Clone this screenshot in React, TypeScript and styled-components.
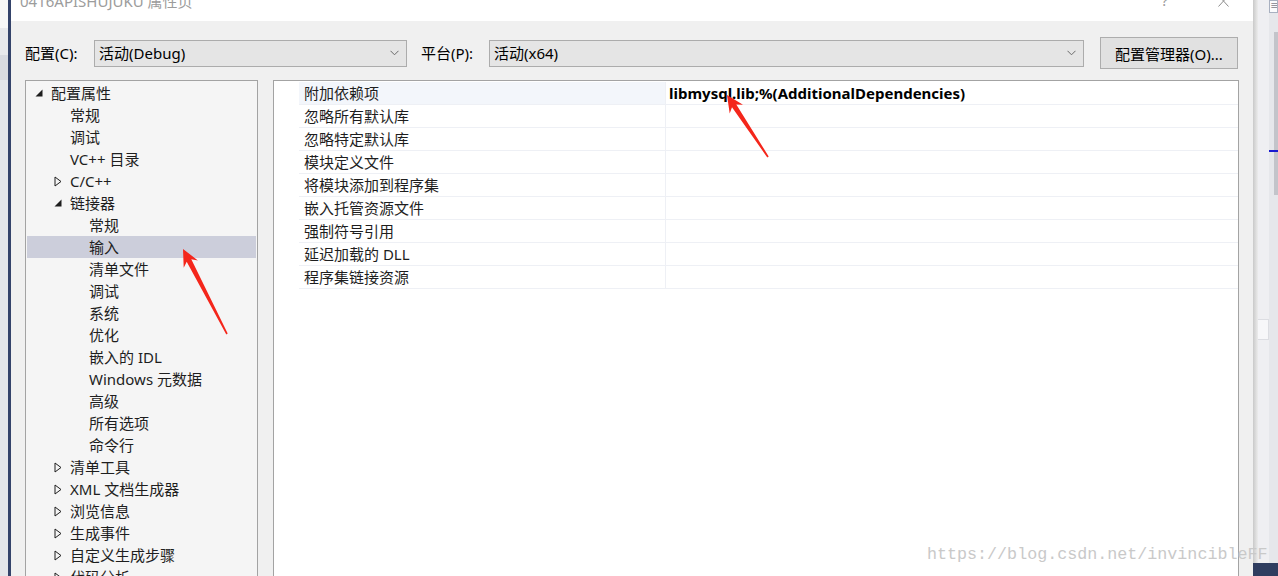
import React from "react";
import styled, { createGlobalStyle } from "styled-components";

const UI = `"Noto Sans", "Noto Sans CJK SC", sans-serif`;

const GlobalStyle = createGlobalStyle`
  html, body { margin: 0; padding: 0; background: #f0f0f0; overflow: hidden; }
  body { font-family: ${UI}; }
  * { box-sizing: border-box; }
`;

const Page = styled.div`
  position: relative;
  display: flex;
  width: 1278px;
  height: 576px;
  overflow: hidden;
  font-family: ${UI};
  font-size: 15px;
  color: #1e1e1e;
`;

const LeftStrip = styled.div`
  width: 8px;
  display: flex;
  flex-direction: column;
  background: #e4e6ea;
`;

const StripBlock = styled.div<{ $h: number; $c: string }>`
  height: ${(p) => p.$h}px;
  background: ${(p) => p.$c};
  flex: none;
`;

const NavyLine = styled.div`
  width: 3px;
  background: #34436a;
`;

const Dialog = styled.div`
  width: 1242px;
  display: flex;
  flex-direction: column;
  background: #f0f0f0;
  overflow: hidden;
`;

const TitleBar = styled.div`
  height: 21px;
  flex: none;
  display: flex;
  align-items: flex-start;
  background: #ffffff;
  overflow: hidden;
`;

const TitleText = styled.div`
  margin-top: -6px;
  padding-left: 9px;
  line-height: 15px;
  font-size: 15px;
  color: #9c9c9c;
  white-space: nowrap;
`;

const TitleButtons = styled.div`
  margin-left: auto;
  display: flex;
  align-items: flex-start;
`;

const HelpGlyph = styled.div`
  margin-top: -7px;
  line-height: 15px;
  font-size: 15px;
  color: #9c9c9c;
  margin-right: 50px;
`;

const CloseGlyph = styled.svg`
  margin-top: -5px;
  margin-right: 24px;
`;

const Body = styled.div`
  flex: 1;
  display: flex;
  flex-direction: column;
  padding: 16px 14px 0 14px;
`;

const ConfigRow = styled.div`
  height: 32px;
  flex: none;
  display: flex;
  align-items: center;
`;

const FieldLabel = styled.div<{ $w: number }>`
  width: ${(p) => p.$w}px;
  flex: none;
  white-space: nowrap;
  color: #000;
  line-height: 20px;
`;

const Combo = styled.div<{ $w: number }>`
  width: ${(p) => p.$w}px;
  height: 27px;
  flex: none;
  display: flex;
  align-items: center;
  padding: 0 7px 0 4px;
  background: #e5e5e5;
  border: 1px solid #acacac;
  color: #000;
  line-height: 20px;
`;

const ComboText = styled.span`
  flex: 1;
`;

const Button = styled.div`
  margin-left: 16px;
  width: 138px;
  height: 32px;
  flex: none;
  display: flex;
  align-items: center;
  justify-content: center;
  background: #e1e1e1;
  border: 1px solid #adadad;
  color: #000;
`;

const Gap = styled.div<{ $w: number }>`
  width: ${(p) => p.$w}px;
  flex: none;
`;

const Panels = styled.div`
  margin-top: 11px;
  height: 520px;
  flex: none;
  display: flex;
  gap: 15px;
`;

const TreePanel = styled.div`
  width: 233px;
  flex: none;
  background: #f5f5f5;
  border: 1px solid #a3a3a3;
  padding: 1px;
`;

const TreeRow = styled.div<{ $level: number; $selected?: boolean }>`
  height: 22px;
  display: flex;
  align-items: center;
  padding-left: ${(p) => 8 + 19 * p.$level}px;
  background: ${(p) => (p.$selected ? "#cccedb" : "transparent")};
  white-space: nowrap;
  line-height: 20px;
`;

const Twisty = styled.div`
  width: 16px;
  flex: none;
  display: flex;
  align-items: center;
`;

const GridPanel = styled.div`
  flex: 1;
  background: #ffffff;
  border: 1px solid #a3a3a3;
  padding: 1px 0 0 25px;
`;

const GridRow = styled.div`
  height: 23px;
  display: flex;
  border-bottom: 1px solid #eef0f5;
`;

const NameCell = styled.div<{ $active?: boolean }>`
  width: 367px;
  flex: none;
  display: flex;
  align-items: center;
  padding-left: 5px;
  border-right: 1px solid #eef0f5;
  background: ${(p) => (p.$active ? "#f3f6fb" : "transparent")};
  line-height: 20px;
  white-space: nowrap;
`;

const ValueCell = styled.div`
  flex: 1;
  display: flex;
  align-items: center;
  padding-left: 3px;
  font-weight: 700;
  color: #000;
  line-height: 20px;
  white-space: nowrap;
`;

const SideArea = styled.div`
  width: 25px;
  flex: none;
  display: flex;
  flex-direction: column;
`;

const SideMain = styled.div`
  flex: 1;
  display: flex;
`;

const Shadow = styled.div`
  width: 5px;
  background: linear-gradient(to right, #c9c9c9, #ececec);
`;

const SideGap = styled.div`
  width: 11px;
  background: #efeff2;
  display: flex;
  flex-direction: column;
  padding-top: 319px;
`;

const SideBox = styled.div`
  height: 21px;
  border: 1px solid #dcdde2;
  border-left: none;
  background: #f7f7f9;
`;

const Track = styled.div`
  position: relative;
  width: 9px;
  background: #e6e7eb;
  display: flex;
  flex-direction: column;
`;

const TrackIcon = styled.div`
  height: 13px;
  border: 1px solid #a8b0c0;
  background: #fbfbfd;
  font-size: 9px;
  line-height: 10px;
  color: #445;
  overflow: hidden;
`;

const Thumb = styled.div`
  margin: 19px 0 0 5px;
  width: 4px;
  height: 163px;
  background: #c3c4ca;
`;

const BlueMark = styled.div`
  position: absolute;
  left: 0;
  top: 150px;
  width: 9px;
  height: 2px;
  background: #1a1ad0;
`;

const BottomBar = styled.div`
  height: 13px;
  background: #2f3d60;
`;

const Overlay = styled.svg`
  position: absolute;
  left: 0;
  top: 0;
  pointer-events: none;
`;

const Watermark = styled.div`
  position: absolute;
  left: 927px;
  top: 545px;
  font-family: "Liberation Mono", "DejaVu Sans Mono", monospace;
  font-size: 16.7px;
  line-height: 20px;
  color: #c9c9c9;
  white-space: nowrap;
  pointer-events: none;
`;

const Chevron = () => (
  <svg width="9" height="6" viewBox="0 0 9 6">
    <polyline points="0.5,0.8 4.5,4.8 8.5,0.8" fill="none" stroke="#6a6a6a" strokeWidth="1" />
  </svg>
);

const Expanded = () => (
  <svg width="8" height="8" viewBox="0 0 8 8">
    <polygon points="7.5,0.5 7.5,7.5 0.5,7.5" fill="#1e1e1e" />
  </svg>
);

const Collapsed = () => (
  <svg width="8" height="11" viewBox="0 0 8 11">
    <polygon points="1,1 7,5.5 1,10" fill="none" stroke="#1e1e1e" strokeWidth="1" />
  </svg>
);

type Node = { t: string; l: number; e?: "open" | "closed"; sel?: boolean };

const tree: Node[] = [
  { t: "配置属性", l: 0, e: "open" },
  { t: "常规", l: 1 },
  { t: "调试", l: 1 },
  { t: "VC++ 目录", l: 1 },
  { t: "C/C++", l: 1, e: "closed" },
  { t: "链接器", l: 1, e: "open" },
  { t: "常规", l: 2 },
  { t: "输入", l: 2, sel: true },
  { t: "清单文件", l: 2 },
  { t: "调试", l: 2 },
  { t: "系统", l: 2 },
  { t: "优化", l: 2 },
  { t: "嵌入的 IDL", l: 2 },
  { t: "Windows 元数据", l: 2 },
  { t: "高级", l: 2 },
  { t: "所有选项", l: 2 },
  { t: "命令行", l: 2 },
  { t: "清单工具", l: 1, e: "closed" },
  { t: "XML 文档生成器", l: 1, e: "closed" },
  { t: "浏览信息", l: 1, e: "closed" },
  { t: "生成事件", l: 1, e: "closed" },
  { t: "自定义生成步骤", l: 1, e: "closed" },
  { t: "代码分析", l: 1, e: "closed" },
];

const props: { name: string; value?: string }[] = [
  { name: "附加依赖项", value: "libmysql.lib;%(AdditionalDependencies)" },
  { name: "忽略所有默认库" },
  { name: "忽略特定默认库" },
  { name: "模块定义文件" },
  { name: "将模块添加到程序集" },
  { name: "嵌入托管资源文件" },
  { name: "强制符号引用" },
  { name: "延迟加载的 DLL" },
  { name: "程序集链接资源" },
];

function arrowPoints(tx: number, ty: number, ex: number, ey: number, head: number, hw: number, neck: number, nw: number, tw: number) {
  const dx = ex - tx;
  const dy = ey - ty;
  const L = Math.hypot(dx, dy);
  const ux = dx / L;
  const uy = dy / L;
  const nx = -uy;
  const ny = ux;
  const p = (a: number, b: number) => `${(tx + ux * a + nx * b).toFixed(1)},${(ty + uy * a + ny * b).toFixed(1)}`;
  return [p(0, 0), p(head, hw), p(neck, nw), p(L, tw), p(L, -tw), p(neck, -nw), p(head, -hw)].join(" ");
}

export default function App() {
  return (
    <>
      <GlobalStyle />
      <Page>
        <LeftStrip>
          <StripBlock $h={28} $c="#f7f7f7" />
          <StripBlock $h={27} $c="#e8e9ec" />
          <StripBlock $h={25} $c="#d8dae0" />
        </LeftStrip>
        <NavyLine />
        <Dialog>
          <TitleBar>
            <TitleText>0416APISHUJUKU 属性页</TitleText>
            <TitleButtons>
              <HelpGlyph>?</HelpGlyph>
              <CloseGlyph width="11" height="12" viewBox="0 0 11 12">
                <line x1="0.5" y1="0.5" x2="10.5" y2="11.5" stroke="#8c8c8c" strokeWidth="1" />
                <line x1="10.5" y1="0.5" x2="0.5" y2="11.5" stroke="#8c8c8c" strokeWidth="1" />
              </CloseGlyph>
            </TitleButtons>
          </TitleBar>
          <Body>
            <ConfigRow>
              <FieldLabel $w={69}>配置(C):</FieldLabel>
              <Combo $w={313}>
                <ComboText>活动(Debug)</ComboText>
                <Chevron />
              </Combo>
              <Gap $w={14} />
              <FieldLabel $w={68}>平台(P):</FieldLabel>
              <Combo $w={595}>
                <ComboText>活动(x64)</ComboText>
                <Chevron />
              </Combo>
              <Button>配置管理器(O)...</Button>
            </ConfigRow>
            <Panels>
              <TreePanel>
                {tree.map((n, i) => (
                  <TreeRow key={i} $level={n.l} $selected={n.sel}>
                    <Twisty>{n.e === "open" ? <Expanded /> : n.e === "closed" ? <Collapsed /> : null}</Twisty>
                    <span>{n.t}</span>
                  </TreeRow>
                ))}
              </TreePanel>
              <GridPanel>
                {props.map((r, i) => (
                  <GridRow key={i}>
                    <NameCell $active={i === 0}>{r.name}</NameCell>
                    <ValueCell>{r.value ?? ""}</ValueCell>
                  </GridRow>
                ))}
              </GridPanel>
            </Panels>
          </Body>
        </Dialog>
        <SideArea>
          <SideMain>
            <Shadow />
            <SideGap>
              <SideBox />
            </SideGap>
            <Track>
              <TrackIcon>≡</TrackIcon>
              <Thumb />
              <BlueMark />
            </Track>
          </SideMain>
          <BottomBar />
        </SideArea>
        <Overlay width="1278" height="576" viewBox="0 0 1278 576">
          <polygon points={arrowPoints(727, 95, 768, 157, 17, 8, 13, 2.6, 0.8)} fill="#f4261b" />
          <polygon points={arrowPoints(183, 249, 227, 334, 17, 8, 13, 2.6, 0.8)} fill="#f4261b" />
        </Overlay>
        <Watermark>https://blog.csdn.net/invincibleFF</Watermark>
      </Page>
    </>
  );
}
